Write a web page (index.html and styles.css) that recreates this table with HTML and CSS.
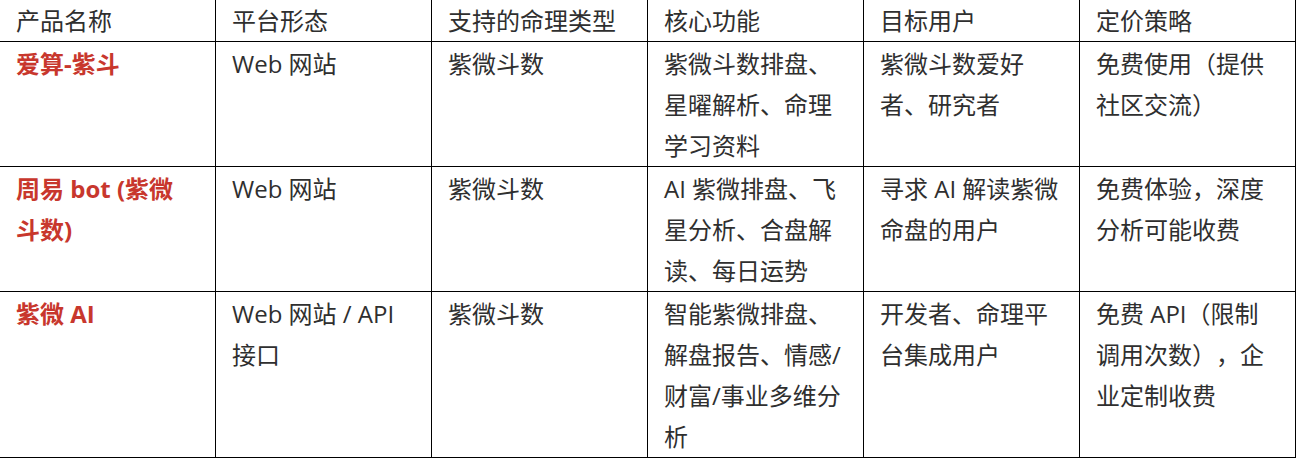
FILE: index.html
```html
<!DOCTYPE html>
<html lang="zh-CN">
<head>
<meta charset="utf-8">
<title>紫微斗数产品对比</title>
<link rel="stylesheet" href="styles.css">
</head>
<body>
<table class="cmp">
  <colgroup>
    <col class="c"><col class="c"><col class="c"><col class="c"><col class="c"><col class="c">
  </colgroup>
  <thead>
    <tr>
      <th>产品名称</th>
      <th>平台形态</th>
      <th>支持的命理类型</th>
      <th>核心功能</th>
      <th>目标用户</th>
      <th>定价策略</th>
    </tr>
  </thead>
  <tbody>
    <tr>
      <td><strong class="name">爱算-紫斗</strong></td>
      <td>Web 网站</td>
      <td>紫微斗数</td>
      <td>紫微斗数排盘、星曜解析、命理学习资料</td>
      <td>紫微斗数爱好者、研究者</td>
      <td>免费使用（提供社区交流）</td>
    </tr>
    <tr>
      <td><strong class="name">周易 bot (紫微斗数)</strong></td>
      <td>Web 网站</td>
      <td>紫微斗数</td>
      <td>AI 紫微排盘、飞星分析、合盘解读、每日运势</td>
      <td>寻求 AI 解读紫微命盘的用户</td>
      <td>免费体验，深度分析可能收费</td>
    </tr>
    <tr class="last">
      <td><strong class="name">紫微 AI</strong></td>
      <td>Web 网站 / API 接口</td>
      <td>紫微斗数</td>
      <td>智能紫微排盘、解盘报告、情感/财富/事业多维分析</td>
      <td>开发者、命理平台集成用户</td>
      <td>免费 API（限制调用次数），企业定制收费</td>
    </tr>
  </tbody>
</table>
</body>
</html>
```

FILE: styles.css
```css
html, body {
  margin: 0;
  padding: 0;
  background: #fff;
}

.cmp {
  border-collapse: collapse;
  table-layout: fixed;
  width: 1297px;
  margin: -1px 0 0 -1px;
  font-family: "Open Sans", "Noto Sans CJK SC", sans-serif;
  font-size: 24px;
  line-height: 41px;
  color: #2f2f2f;
  text-spacing-trim: space-all;
}

.cmp .c {
  width: 216px;
}

.cmp th,
.cmp td {
  border: 1px solid #000;
  padding: 1px 20px 0 16px;
  text-align: left;
  vertical-align: top;
  font-weight: normal;
  word-break: normal;
}

.cmp th {
  padding-top: 0;
}

.name {
  color: #c8372d;
  font-weight: bold;
}
```
